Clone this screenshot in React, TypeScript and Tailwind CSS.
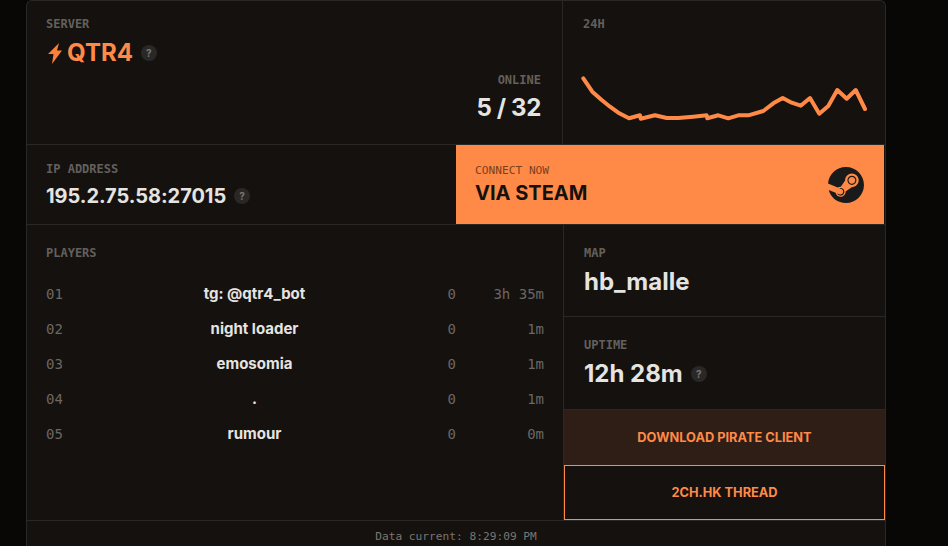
import { SiSteam } from "react-icons/si";

const mono = "font-['DejaVu_Sans_Mono','Liberation_Mono',monospace]";
const label = `${mono} text-[12px] leading-4 font-bold text-[#63605c]`;

const Help = () => (
  <span className="ml-2 inline-flex h-4 w-4 items-center justify-center rounded-full bg-[#2a2827] text-[10px] font-bold leading-none text-[#7a7672]">?</span>
);

const players = [
  ["01", "tg: @qtr4_bot", "0", "3h 35m"],
  ["02", "night loader", "0", "1m"],
  ["03", "emosomia", "0", "1m"],
  ["04", ".", "0", "1m"],
  ["05", "rumour", "0", "0m"],
];

const points =
  "3.3,8.3 12.3,21.7 21.7,30 30,36.7 39.3,43.3 49,48.3 60,45.3 60.7,48.7 75,45.3 86.7,48 98.3,48 113.3,46.7 126.7,45.3 127.3,48.3 138.3,45.3 148.3,48.3 158.3,45.3 168.3,45.3 183.3,41 193.3,33.3 202.7,28 211.7,32.7 220.7,35.7 230,28 239.3,43.7 248.3,36 257.3,20 266.7,28.7 275.7,20 285,39";

export default function App() {
  return (
    <div className="flex h-[546px] w-[948px] overflow-hidden bg-[#080706] pl-[26px] font-['Inter',sans-serif] text-[#e6e4e1]">
      <div className="flex h-[560px] w-[860px] flex-col rounded-t-md border border-b-0 border-[#2a2826] bg-[#14110f]">
        <div className="flex h-[144px] shrink-0 border-b border-[#2a2826]">
          <div className="flex w-[536px] flex-col border-r border-[#2a2826] pl-[19px] pr-[21px] pt-[15px]">
            <div className={label}>SERVER</div>
            <div className="mt-[5px] flex items-center text-2xl font-bold leading-8 text-[#ff8a47]">
              <svg viewBox="0 0 15 21" className="ml-px mr-[5px] h-[21px] w-[15px]" fill="#ff7f3a">
                <path d="M12 0 1 11h5.5L5 21 15 7.5h-5Z" />
              </svg>
              QTR4
              <Help />
            </div>
            <div className={`${label} mt-[3px] self-end`}>ONLINE</div>
            <div className="mt-[4px] self-end text-2xl font-bold leading-8 tracking-[-0.015em]">5 / 32</div>
          </div>
          <div className="flex-1 pl-5 pt-[15px]">
            <div className={label}>24H</div>
            <svg viewBox="0 0 290 60" className="ml-[-3px] mt-[38px] h-[60px] w-[290px]" fill="none">
              <polyline points={points} stroke="#ff8a47" strokeWidth="4" strokeLinejoin="round" strokeLinecap="round" />
            </svg>
          </div>
        </div>

        <div className="flex h-[80px] shrink-0 border-b border-[#2a2826]">
          <div className="w-[429px] pl-[19px] pt-4">
            <div className={label}>IP ADDRESS</div>
            <div className="mt-[5px] flex items-center text-xl font-bold leading-7 tracking-[-0.05px]">
              195.2.75.58:27015
              <Help />
            </div>
          </div>
          <div className="mr-px flex flex-1 items-center justify-between bg-[#ff8a47] pl-[19px] pr-5">
            <div>
              <div className={`${mono} text-[11.2px] leading-4 text-[#7a3f1c]`}>CONNECT NOW</div>
              <div className="text-xl font-bold leading-7 text-[#14110f]">VIA STEAM</div>
            </div>
            <SiSteam className="h-9 w-9 text-[#1a1a1a]" />
          </div>
        </div>

        <div className="flex h-[296px] shrink-0 border-b border-[#2a2826]">
          <div className="w-[537px] border-r border-[#2a2826] pl-[19px] pt-5">
            <div className={label}>PLAYERS</div>
            <div className="mt-[16px] grid grid-cols-[16px_385px_9px_88px] auto-rows-[35px] items-center">
              {players.map(([n, name, score, time]) => (
                <div key={n} className="contents">
                  <div className={`${mono} text-[14px] text-[#6b6763]`}>{n}</div>
                  <div className="text-center text-[15px] font-bold">{name}</div>
                  <div className={`${mono} text-right text-[14px] text-[#6b6763]`}>{score}</div>
                  <div className={`${mono} text-right text-[14px] text-[#6b6763]`}>{time}</div>
                </div>
              ))}
            </div>
          </div>
          <div className="flex flex-1 flex-col">
            <div className="h-[92px] border-b border-[#2a2826] pl-5 pt-5">
              <div className={label}>MAP</div>
              <div className="mt-[5px] text-2xl font-bold leading-8">hb_malle</div>
            </div>
            <div className="h-[93px] border-b border-[#2a2826] pl-5 pt-5">
              <div className={label}>UPTIME</div>
              <div className="mt-[5px] flex items-center text-2xl font-bold leading-8">
                12h 28m
                <Help />
              </div>
            </div>
            <div className="flex h-[55px] items-center justify-center bg-[#2e1e16] text-[12.8px] font-bold text-[#ff8a47]">DOWNLOAD PIRATE CLIENT</div>
            <div className="flex h-[55px] items-center justify-center border border-[#ff8a47] text-[12.8px] font-bold text-[#ff8a47]">2CH.HK THREAD</div>
          </div>
        </div>

        <div className={`${mono} pt-[8px] text-center text-[11.2px] leading-4 text-[#7a7672]`}>Data current: 8:29:09 PM</div>
      </div>
    </div>
  );
}
